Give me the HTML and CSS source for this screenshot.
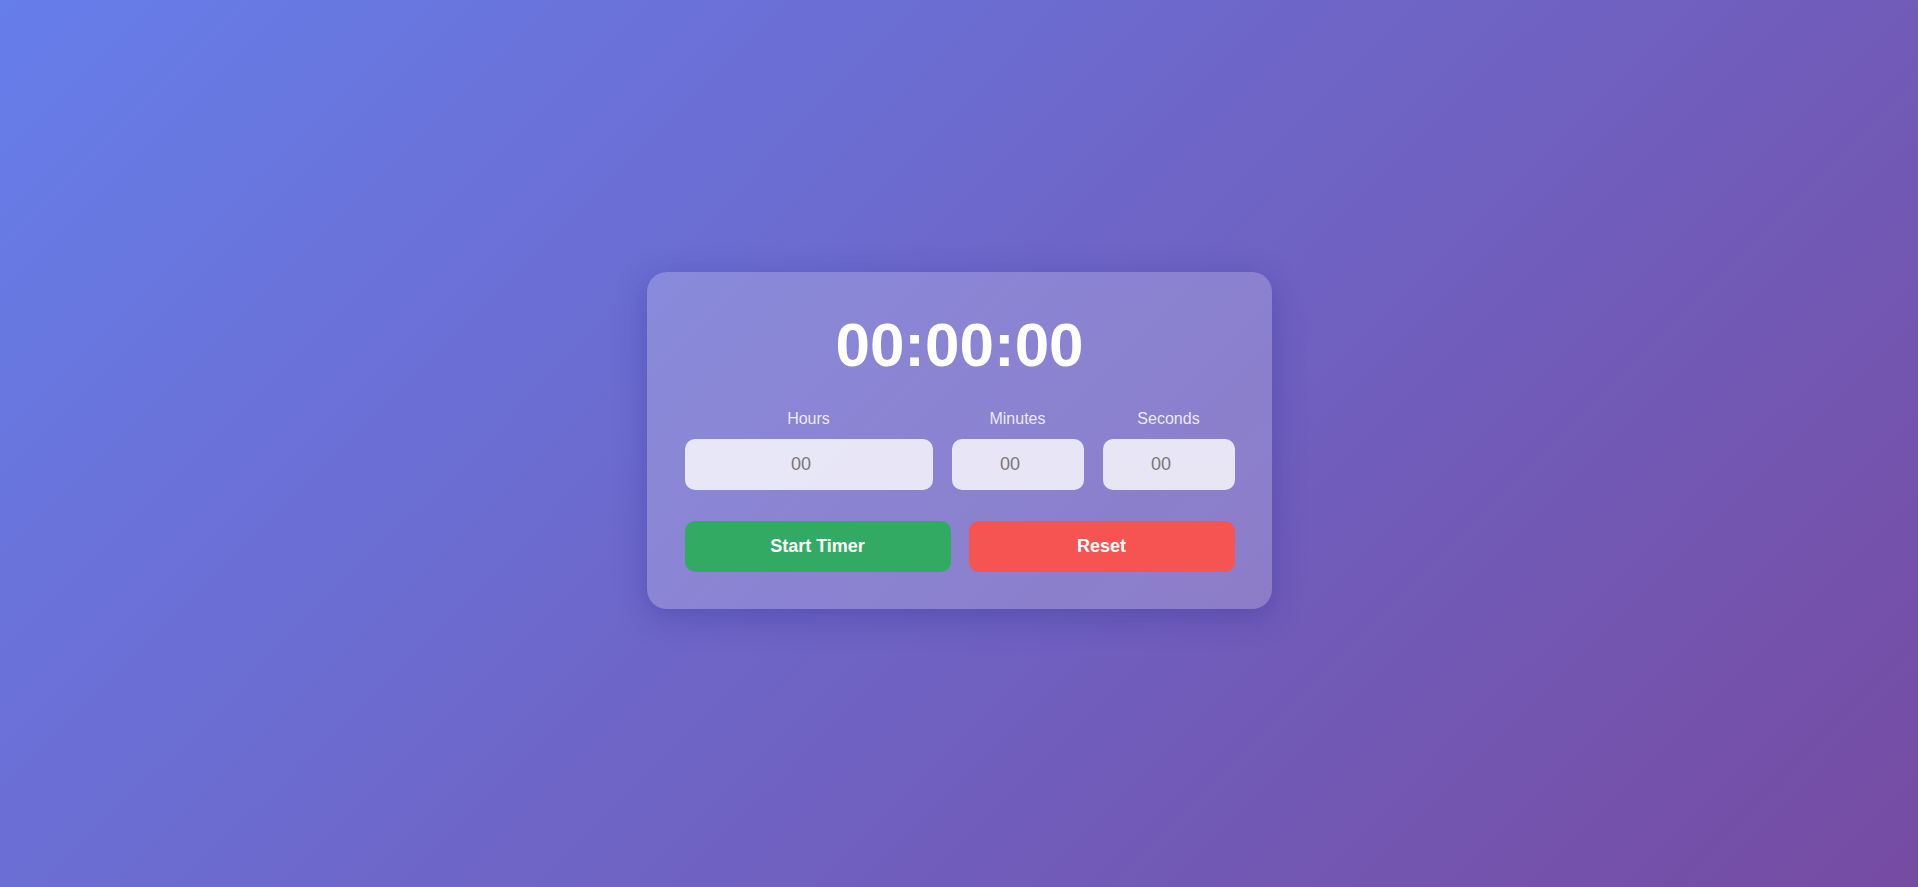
FILE: index.html
```html
<!DOCTYPE html>
<html lang="en">
<head>
<meta charset="utf-8">
<title>Countdown Timer</title>
<link rel="stylesheet" href="styles.css">
</head>
<body>
<main class="card">
  <div class="display">00:00:00</div>
  <div class="fields">
    <label class="field">
      <span class="field-label">Hours</span>
      <input class="field-input" type="number" placeholder="00">
    </label>
    <label class="field">
      <span class="field-label">Minutes</span>
      <input class="field-input" type="number" placeholder="00">
    </label>
    <label class="field">
      <span class="field-label">Seconds</span>
      <input class="field-input" type="number" placeholder="00">
    </label>
  </div>
  <div class="actions">
    <button class="btn btn-start" type="button">Start Timer</button>
    <button class="btn btn-reset" type="button">Reset</button>
  </div>
</main>
</body>
</html>
```
FILE: styles.css
```css
* { box-sizing: border-box; }

html, body {
  margin: 0;
  height: 100%;
}

body {
  font-family: "Liberation Sans", Arial, sans-serif;
  background: linear-gradient(135deg, #667eea 0%, #764ba2 100%);
  display: flex;
  align-items: center;
  justify-content: center;
  min-height: 100vh;
}

.card {
  width: 625px;
  padding: 37px 37px 37px 38px;
  margin-bottom: 7px;
  border-radius: 20px;
  background: rgba(255, 255, 255, 0.2);
  box-shadow: 0 8px 32px rgba(31, 38, 135, 0.3);
}

.display {
  font-size: 62px;
  font-weight: 700;
  color: #ffffff;
  text-align: center;
  line-height: normal;
  margin-bottom: 30px;
}

.fields {
  display: grid;
  grid-template-columns: 248fr 132fr 132fr;
  column-gap: 19px;
  margin-bottom: 31px;
}

.field {
  display: flex;
  flex-direction: column;
  align-items: stretch;
  min-width: 0;
}

.field-label {
  display: block;
  font-size: 16px;
  color: rgba(255, 255, 255, 0.85);
  text-align: center;
  margin-bottom: 11px;
}

.field-input {
  width: 100%;
  height: 51px;
  border: none;
  border-radius: 10px;
  background: rgba(255, 255, 255, 0.8);
  font-family: "Liberation Sans", Arial, sans-serif;
  font-size: 18px;
  color: #444;
  text-align: center;
  padding: 0 12px;
  outline: none;
}

.field-input::placeholder {
  color: #777777;
  opacity: 1;
}

.actions {
  display: grid;
  grid-template-columns: 1fr 1fr;
  column-gap: 18px;
}

.btn {
  height: 51px;
  border: none;
  border-radius: 10px;
  font-family: "Liberation Sans", Arial, sans-serif;
  font-size: 18px;
  font-weight: 700;
  color: #ffffff;
  cursor: pointer;
}

.btn-start { background: #33aa63; }
.btn-reset { background: #f65353; }
```
